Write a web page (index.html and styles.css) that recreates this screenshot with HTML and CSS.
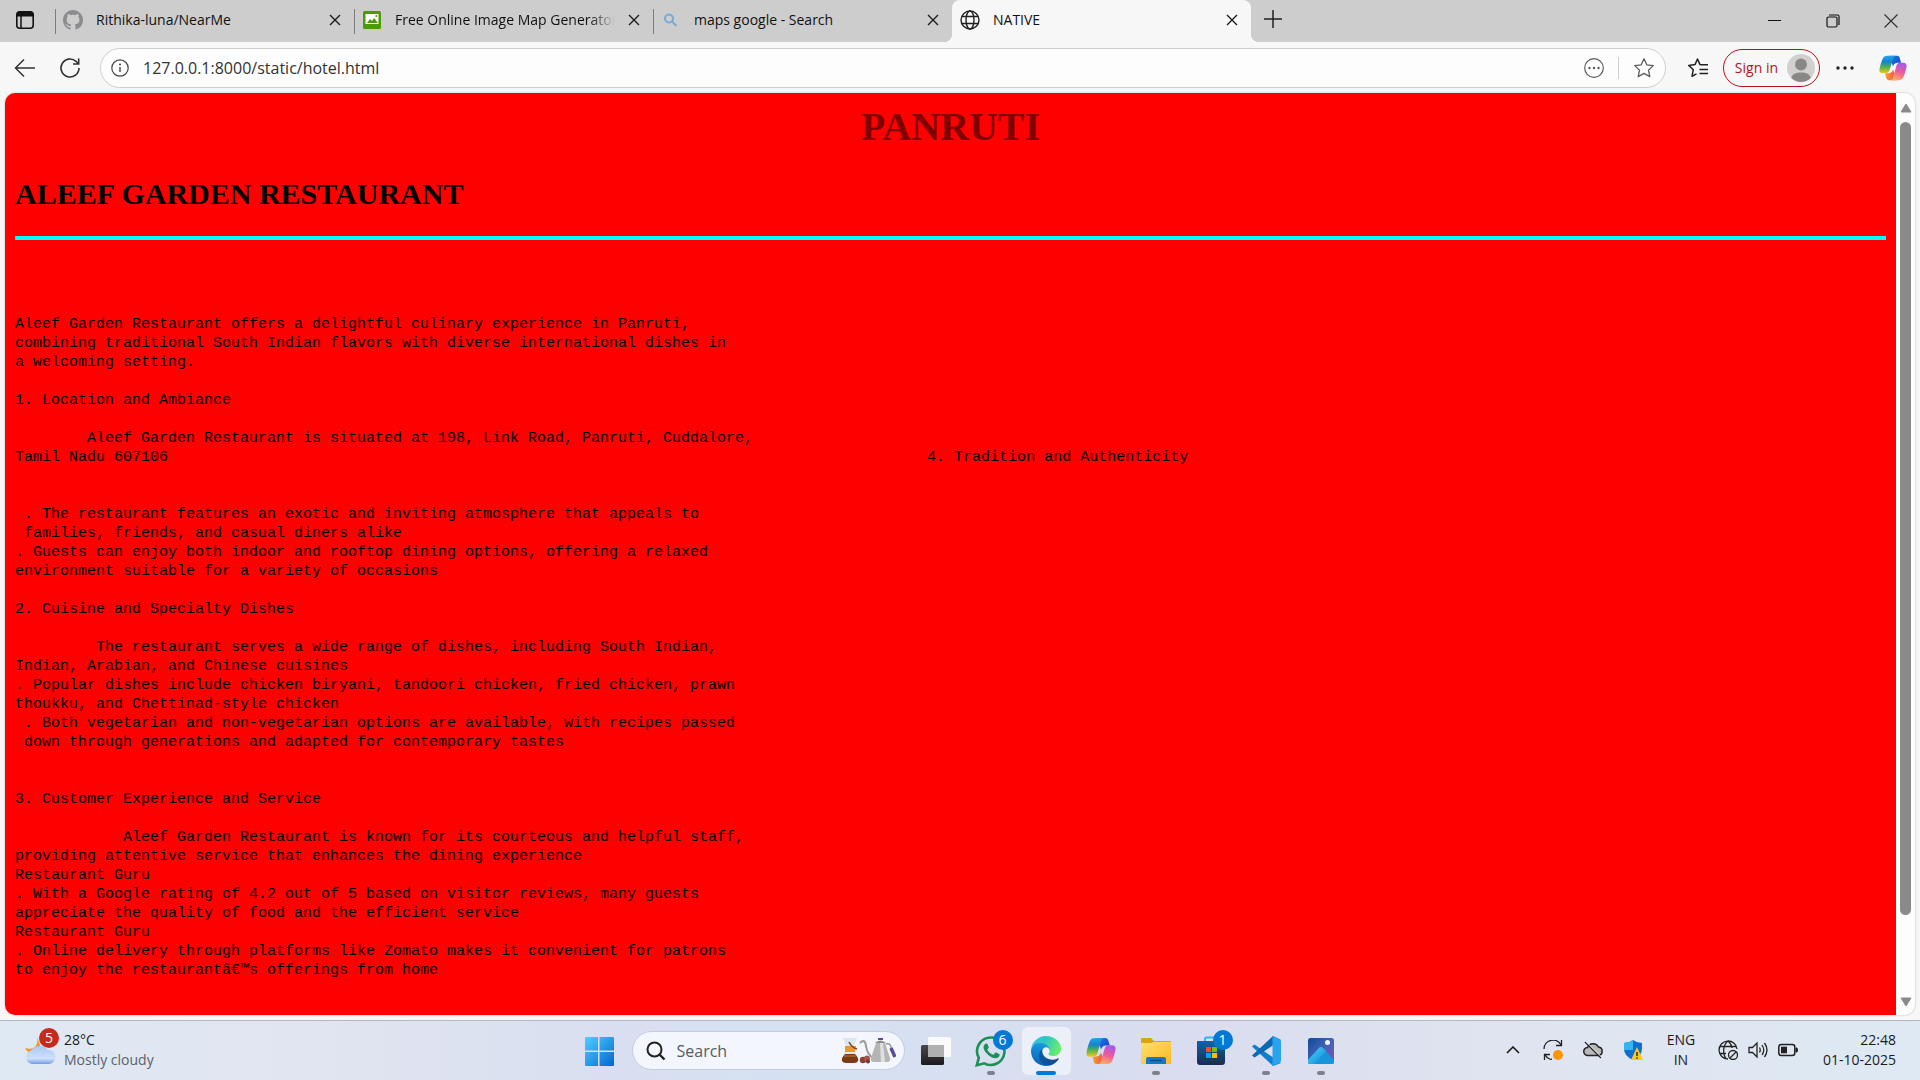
FILE: index.html
```html
<!DOCTYPE html>
<html lang="en">
<head>
<meta charset="utf-8">
<title>NATIVE</title>
<link rel="stylesheet" href="styles.css">
</head>
<body>
<svg class="defs" aria-hidden="true">
  <defs>
    <linearGradient id="copA" x1="0" y1="0" x2="0" y2="1"><stop offset="0" stop-color="#1fa5ee"/><stop offset=".35" stop-color="#1583c9"/><stop offset=".65" stop-color="#54b24f"/><stop offset="1" stop-color="#f4c815"/></linearGradient>
    <linearGradient id="copB" x1=".6" y1="0" x2=".3" y2="1"><stop offset="0" stop-color="#a557ec"/><stop offset=".5" stop-color="#ee5a9b"/><stop offset="1" stop-color="#fdb05c"/></linearGradient>
    <linearGradient id="copC" x1="0" y1="0" x2="1" y2="1"><stop offset="0" stop-color="#1c86e8"/><stop offset="1" stop-color="#1735c4"/></linearGradient>
    <linearGradient id="copD" x1="0" y1="0" x2="1" y2="0"><stop offset="0" stop-color="#f6a033"/><stop offset="1" stop-color="#ef4a43"/></linearGradient>
    <symbol id="copilot" viewBox="0 0 30 30">
      <path fill="url(#copC)" d="M11 2h8.500c1.500 0 2.300 1 2.700 2.300l1.500 5.200H20c-3 0-4.500 2-5 4z"/>
      <path fill="url(#copD)" d="M19 28h-8.500c-1.500 0-2.300-1-2.700-2.300L6.500 20.500H10c3 0 4.500-2 5-4z"/>
      <path fill="url(#copA)" d="M9 2h9c-1.500 0-2.500 1.200-3 3l-3.500 12c-.7 2.500-2 3.700-4.300 3.700H4c-2.600 0-4-1.700-3.500-4.300C1.300 12 2.500 8.500 3.800 5.300 4.700 3 6.500 2 9 2z"/>
      <path fill="url(#copB)" d="M21 28h-9c1.500 0 2.500-1.200 3-3l3.500-12c.7-2.500 2-3.700 4.300-3.700H26c2.600 0 4 1.700 3.500 4.300-.8 4.400-2 7.900-3.300 11.100-.9 2.300-2.700 3.300-5.200 3.300z"/>
    </symbol>
    <symbol id="cross" viewBox="0 0 12 12"><path d="M1 1l10 10M11 1L1 11" fill="none" stroke="#1b1b1b" stroke-width="1.400"/></symbol>
    <symbol id="globe" viewBox="0 0 20 20"><g fill="none" stroke="#222" stroke-width="1.400"><circle cx="10" cy="10" r="9"/><ellipse cx="10" cy="10" rx="4" ry="9"/><path d="M1.800 6.500h16.400M1.800 13.500h16.400"/></g></symbol>
  </defs>
</svg>

<header class="browser">
  <div class="tabstrip">
    <button class="tab-actions" aria-label="Tab actions">
      <svg width="20" height="20" viewBox="0 0 20 20"><rect x="1.800" y="1.800" width="16.400" height="16.400" rx="3" fill="none" stroke="#111" stroke-width="1.600"/><path d="M2 6V4.500Q2 2 4.500 2h11Q18 2 18 4.500V6z" fill="#111" stroke="#111"/><path d="M6 6v12" stroke="#111" stroke-width="1.500"/></svg>
    </button>
    <nav class="tabs" aria-label="Tabs">
      <div class="tab">
        <svg class="favicon" viewBox="0 0 16 16"><path fill="#8a8c8f" d="M8 0C3.580 0 0 3.580 0 8c0 3.540 2.290 6.530 5.470 7.590.4.070.55-.17.55-.38 0-.19-.01-.82-.01-1.490-2.010.37-2.530-.49-2.690-.94-.09-.23-.48-.94-.82-1.130-.28-.15-.68-.52-.01-.53.63-.01 1.080.58 1.230.82.72 1.210 1.870.87 2.330.66.070-.52.28-.87.51-1.070-1.780-.2-3.640-.89-3.640-3.950 0-.87.31-1.590.82-2.150-.08-.2-.36-1.020.08-2.120 0 0 .67-.21 2.200.82.64-.18 1.320-.27 2-.27s1.360.09 2 .27c1.530-1.040 2.200-.82 2.200-.82.44 1.100.16 1.920.08 2.120.51.56.82 1.270.82 2.150 0 3.070-1.870 3.750-3.650 3.950.29.25.54.73.54 1.480 0 1.070-.01 1.930-.01 2.200 0 .21.15.46.55.38A8.010 8.010 0 0 0 16 8c0-4.420-3.580-8-8-8z"/></svg>
        <a class="tab-title" href="#">Rithika-luna/NearMe</a>
        <button class="tab-close" aria-label="Close tab"><svg width="12" height="12"><use href="#cross"/></svg></button>
      </div>
      <div class="tab">
        <svg class="favicon" viewBox="0 0 20 20"><rect x="1" y="1" width="18" height="18" rx="1.500" fill="#4a9b08"/><path d="M3.500 4h13v10h-13z" fill="#fff"/><path d="M5 13l3-4 2 2 2-3 4 5z" fill="#4a9b08"/><circle cx="14.300" cy="6" r="1" fill="#4a9b08"/></svg>
        <a class="tab-title faded" href="#">Free Online Image Map Generator</a>
        <button class="tab-close" aria-label="Close tab"><svg width="12" height="12"><use href="#cross"/></svg></button>
      </div>
      <div class="tab">
        <svg class="favicon" viewBox="0 0 20 20"><g fill="none" stroke="#79a9d4" stroke-width="2"><circle cx="8" cy="8.500" r="4"/><path d="M11 11.500l4.500 4.500"/></g></svg>
        <a class="tab-title" href="#">maps google - Search</a>
        <button class="tab-close" aria-label="Close tab"><svg width="12" height="12"><use href="#cross"/></svg></button>
      </div>
      <div class="tab active">
        <svg class="favicon"><use href="#globe"/></svg>
        <a class="tab-title" href="#">NATIVE</a>
        <button class="tab-close" aria-label="Close tab"><svg width="12" height="12"><use href="#cross"/></svg></button>
      </div>
      <button class="new-tab" aria-label="New tab"><svg width="18" height="18" viewBox="0 0 18 18"><path d="M9 0v18M0 9h18" stroke="#222" stroke-width="1.500"/></svg></button>
    </nav>
    <div class="window-controls">
      <button aria-label="Minimize"><svg width="14" height="14" viewBox="0 0 14 14"><path d="M0 6.500h13" stroke="#111"/></svg></button>
      <button aria-label="Restore"><svg width="14" height="14" viewBox="0 0 14 14" fill="none" stroke="#111" stroke-width="1.200"><rect x="1" y="3" width="10" height="10" rx="1.500"/><path d="M3 1h8.500Q13 1 13 2.500V11"/></svg></button>
      <button aria-label="Close"><svg width="14" height="14" viewBox="0 0 14 14"><path d="M.5.5l13 13M13.500.5l-13 13" stroke="#333" stroke-width="1.200"/></svg></button>
    </div>
  </div>

  <div class="toolbar">
    <button class="nav-button" aria-label="Back"><svg width="22" height="20" viewBox="0 0 22 20"><path d="M21 10H2M10 1.500L1.500 10 10 18.500" fill="none" stroke="#333" stroke-width="1.500"/></svg></button>
    <button class="nav-button" aria-label="Refresh"><svg width="22" height="22" viewBox="0 0 22 22"><path d="M20 11a9 9 0 1 1-3-6.700L19.500 7M19.700 1.500V7H14" fill="none" stroke="#333" stroke-width="1.600"/></svg></button>
    <div class="address">
      <button aria-label="Site information"><svg width="18" height="18" viewBox="0 0 18 18"><circle cx="9" cy="9" r="8.200" fill="none" stroke="#444" stroke-width="1.200"/><path d="M9 8v5" stroke="#444" stroke-width="1.400"/><circle cx="9" cy="5.500" r="1" fill="#444"/></svg></button>
      <input type="text" aria-label="Address" value="127.0.0.1:8000/static/hotel.html">
      <button aria-label="More page actions"><svg width="20" height="20" viewBox="0 0 20 20"><circle cx="10" cy="10" r="9.300" fill="none" stroke="#5c5c5c" stroke-width="1.200"/><g fill="#5c5c5c"><circle cx="5.500" cy="10" r="1.200"/><circle cx="10" cy="10" r="1.200"/><circle cx="14.500" cy="10" r="1.200"/></g></svg></button>
      <span class="divider"></span>
      <button aria-label="Add to favorites"><svg width="22" height="22" viewBox="0 0 22 22"><path d="M11 1.800l2.800 6 6.500.8-4.800 4.500 1.300 6.500-5.800-3.200-5.800 3.200 1.300-6.500L1.700 8.600l6.500-.8z" fill="none" stroke="#5c5c5c" stroke-width="1.300" stroke-linejoin="round"/></svg></button>
    </div>
    <button class="favorites" aria-label="Favorites"><svg width="22" height="22" viewBox="0 0 22 22"><path d="M14 7.700l-1-.1L10.500 2 8 7.600l-6.300.8 4.600 4.300L5 19.300l4.500-2.500M14 7.800h7M12.500 12.500H21M12.500 16.500H21" fill="none" stroke="#222" stroke-width="1.500" stroke-linejoin="round"/></svg></button>
    <button class="sign-in"><span>Sign in</span><svg width="28" height="28" viewBox="0 0 28 28"><circle cx="14" cy="14" r="14" fill="#d2d0ce"/><circle cx="14" cy="10.500" r="6" fill="#8a8886"/><path d="M4.300 24C5 20 9 18.500 14 18.500S23 20 23.700 24A14 14 0 0 1 4.300 24z" fill="#8a8886"/></svg></button>
    <button class="settings" aria-label="Settings and more"><svg width="18" height="4" viewBox="0 0 18 4" fill="#222"><circle cx="2" cy="2" r="1.700"/><circle cx="9" cy="2" r="1.700"/><circle cx="16" cy="2" r="1.700"/></svg></button>
    <button class="copilot-button" aria-label="Copilot"><svg width="28" height="28"><use href="#copilot"/></svg></button>
  </div>
</header>

<div class="viewport">
  <main class="page">
    <h1>PANRUTI</h1>
    <h2>ALEEF GARDEN RESTAURANT</h2>
    <hr>
    <div class="article">
<pre>Aleef Garden Restaurant offers a delightful culinary experience in Panruti,
combining traditional South Indian flavors with diverse international dishes in
a welcoming setting.

1. Location and Ambiance

        Aleef Garden Restaurant is situated at 198, Link Road, Panruti, Cuddalore,
Tamil Nadu 607106


 . The restaurant features an exotic and inviting atmosphere that appeals to
 families, friends, and casual diners alike
. Guests can enjoy both indoor and rooftop dining options, offering a relaxed
environment suitable for a variety of occasions

2. Cuisine and Specialty Dishes

         The restaurant serves a wide range of dishes, including South Indian,
Indian, Arabian, and Chinese cuisines
. Popular dishes include chicken biryani, tandoori chicken, fried chicken, prawn
thoukku, and Chettinad-style chicken
 . Both vegetarian and non-vegetarian options are available, with recipes passed
 down through generations and adapted for contemporary tastes


3. Customer Experience and Service

            Aleef Garden Restaurant is known for its courteous and helpful staff,
providing attentive service that enhances the dining experience
Restaurant Guru
. With a Google rating of 4.2 out of 5 based on visitor reviews, many guests
appreciate the quality of food and the efficient service
Restaurant Guru
. Online delivery through platforms like Zomato makes it convenient for patrons
to enjoy the restaurantâ€™s offerings from home</pre>
<pre class="aside">4. Tradition and Authenticity</pre>
    </div>
  </main>
  <div class="scrollbar">
    <svg width="12" height="10" viewBox="0 0 12 10"><path d="M6 1l5 8H1z" fill="#8a8a8a" stroke="#8a8a8a" stroke-linejoin="round"/></svg>
    <div class="track"><div class="thumb"></div></div>
    <svg width="12" height="10" viewBox="0 0 12 10"><path d="M6 9L1 1h10z" fill="#8a8a8a" stroke="#8a8a8a" stroke-linejoin="round"/></svg>
  </div>
</div>

<footer class="taskbar">
  <button class="weather">
    <span class="weather-icon">
      <svg width="32" height="32" viewBox="0 0 32 32"><defs><linearGradient id="cloud" x1="0" y1="0" x2="0" y2="1"><stop offset="0" stop-color="#a9c7f7"/><stop offset=".7" stop-color="#cfe0fb"/><stop offset="1" stop-color="#6f9bea"/></linearGradient></defs><path d="M13 2c2 8-2 15-12 12 3 7 12 7 16 1z" fill="#f19a1f"/><path d="M8 30a7 7 0 0 1-1-13.500 10 9 0 0 1 17-.5 7 7 0 0 1 1 14z" fill="url(#cloud)"/></svg>
      <span class="badge red">5</span>
    </span>
    <span class="weather-text"><span>28°C</span><span class="muted">Mostly cloudy</span></span>
  </button>

  <div class="apps">
    <button class="app" aria-label="Start"><svg width="30" height="30" viewBox="0 0 30 30"><defs><linearGradient id="win" x1="0" y1="0" x2="1" y2="1"><stop offset="0" stop-color="#4fd0ff"/><stop offset="1" stop-color="#0067cf"/></linearGradient></defs><path fill="url(#win)" d="M2 1h12v13.500H1V2Q1 1 2 1zM15.500 1H29q1 0 1 1v12.500H15.500zM1 16h13v14H2q-1 0-1-1zM15.500 16H30v13q0 1-1 1H15.500z"/></svg></button>
    <label class="search">
      <svg width="20" height="20" viewBox="0 0 20 20"><circle cx="8.500" cy="8.500" r="7" fill="none" stroke="#222" stroke-width="2"/><path d="M13.500 13.500l5 5" stroke="#222" stroke-width="2.400"/></svg>
      <input type="text" placeholder="Search" aria-label="Search">
      <svg width="56" height="28" viewBox="0 0 56 28">
        <path d="M3 1h14l-4 10 4 8H3l4-8z" fill="#dbe7ec"/><path d="M5 9h11l-1 6H5z" fill="#e39b31"/><path d="M9 5q3 6 8 7" stroke="#8a3b1c" stroke-width="1.500" fill="none"/><path d="M5 17h10q4 4 3 7-1 2-4 2H6q-3 0-4-2-1-3 3-7z" fill="#7b3a17"/><path d="M4 19h12" stroke="#c9783a"/>
        <circle cx="23" cy="23" r="3.200" fill="#8b3f35"/><circle cx="27" cy="21.500" r="3" fill="#a25548"/><circle cx="28" cy="24.500" r="2" fill="#75332c"/>
        <path d="M34 22Q27 17 26 9t-6-3" fill="none" stroke="#9a9a9a" stroke-width="2"/><path d="M36 6h9l5 15q1 4-3 4H34q-4 0-3-4z" fill="#b5b5b5"/><path d="M40 6h3l2 19h-4z" fill="#e0e0e0"/><path d="M35 6q5-5 11 0z" fill="#8d8d8d"/><path d="M38 1h5v2h-5z" fill="#5a4a94"/><path d="M46 7q6-1 5 6" fill="none" stroke="#999" stroke-width="1.500"/><path d="M51 11l4 9" stroke="#5c4c98" stroke-width="3.500"/>
      </svg>
    </label>
    <button class="app" aria-label="Task view"><svg width="30" height="30" viewBox="0 0 30 30"><defs><linearGradient id="dark" x1="0" y1="0" x2="0" y2="1"><stop offset="0" stop-color="#4a4a4a"/><stop offset="1" stop-color="#1b1b1b"/></linearGradient></defs><rect x="0" y="9" width="23" height="20" rx="1.500" fill="url(#dark)"/><rect x="7" y="1" width="23" height="20" rx="1.500" fill="#fafafa"/><path d="M7 9h16v12H8.500Q7 21 7 19.500z" fill="#b0b0b0"/></svg></button>
    <button class="app running" aria-label="WhatsApp"><svg width="32" height="32" viewBox="0 0 32 32"><path d="M1.800 30.200l2-7.300A13.700 13.700 0 1 1 9.300 28.300z" fill="none" stroke="#1d8f57" stroke-width="2.600"/><path d="M11.500 8.500c.6 0 .9.200 1.200.9l1 2.500c.2.500 0 .9-1.200 2.300-.3.300 0 .8.300 1.300 1.200 1.900 2.800 3.200 4.900 4.100.5.200.8.100 1.100-.2l1.300-1.600c.4-.5.700-.4 1.300-.2l2.600 1.300c.5.300.8.400.7.900-.2 2.200-2 3.400-4 3.500-2.600.1-6.600-1.900-9.200-5-2.200-2.500-3.400-5.100-2.800-7.400.4-1.400 1.600-2.400 2.800-2.400z" fill="#1d8f57"/></svg><span class="badge blue">6</span></button>
    <button class="app running current" aria-label="Microsoft Edge"><svg width="30" height="30" viewBox="0 0 256 256"><defs><linearGradient id="e1" x1="0" y1=".5" x2="1" y2=".5"><stop offset="0" stop-color="#0c59a4"/><stop offset="1" stop-color="#114a8b"/></linearGradient><linearGradient id="e2" x1=".6" y1="0" x2=".4" y2="1"><stop offset="0" stop-color="#1b9de2"/><stop offset=".5" stop-color="#0f7fd0"/><stop offset="1" stop-color="#0a61b8"/></linearGradient><linearGradient id="e3" x1="0" y1="0" x2="1" y2=".3"><stop offset="0" stop-color="#35c1f1"/><stop offset=".5" stop-color="#2dc7c0"/><stop offset="1" stop-color="#66eb6e"/></linearGradient></defs><path fill="url(#e1)" d="M231 190.500c-3.400 1.800-6.900 3.400-10.500 4.700a101.900 101.900 0 0 1-35.900 6.500c-47.300 0-88.500-32.500-88.500-74.300 0-11.400 6.400-21.900 16.600-27.400-42.800 1.800-53.800 46.400-53.800 72.500 0 73.900 68.100 81.400 82.800 81.400 7.900 0 19.800-2.300 27-4.600l1.300-.4a128.300 128.300 0 0 0 66.600-52.800 4 4 0 0 0-5.600-5.600z"/><path fill="url(#e2)" d="M105.700 241.400a79.200 79.200 0 0 1-22.700-21.300 80.700 80.700 0 0 1 29.500-120c3.200-1.500 8.500-4.100 15.600-4 10.200.1 19.700 4.900 25.800 13 4 5.400 6.300 11.900 6.400 18.700 0-.2 24.500-79.600-80-79.600-43.900 0-80 41.700-80 78.200-.2 19.300 4 38.500 12.100 56a128 128 0 0 0 156.400 67 75.500 75.500 0 0 1-63.100-8z"/><path fill="url(#e3)" d="M152.300 148.900c-.9 1-3.400 2.500-3.400 5.600 0 2.600 1.700 5.200 4.800 7.300 14.400 10.100 41.700 8.700 41.800 8.700 10.700 0 21.200-2.900 30.500-8.300A61.800 61.800 0 0 0 256.400 109c.3-22.400-8-37.300-11.300-43.900C223.900 23.500 177.700 0 128 0A128 128 0 0 0 0 126.200c.5-36.500 36.800-66 80-66 3.500 0 23.500.3 42 10.100 16.300 8.600 24.900 18.900 30.800 29.200 6.200 10.700 7.300 24.100 7.300 29.500s-2.700 13.300-7.800 19.900z"/></svg></button>
    <button class="app" aria-label="Copilot"><svg width="30" height="30"><use href="#copilot"/></svg></button>
    <button class="app running" aria-label="File Explorer"><svg width="30" height="28" viewBox="0 0 30 28"><defs><linearGradient id="fold" x1="0" y1="0" x2="1" y2="1"><stop offset="0" stop-color="#ffe06e"/><stop offset="1" stop-color="#f8ba24"/></linearGradient></defs><path d="M0 2Q0 1 1 1h9l3 3h16q1 0 1 1v8H0z" fill="#dda313"/><path d="M0 6h10l3-1h17v21q0 1-1 1H1q-1 0-1-1z" fill="url(#fold)"/><path d="M5 27v-5q0-2 2-2h16q2 0 2 2v5z" fill="#1579c8"/><path d="M9 23.500h12" stroke="#0b4f93" stroke-width="1.500"/></svg></button>
    <button class="app" aria-label="Microsoft Store"><svg width="30" height="30" viewBox="0 0 30 30"><defs><linearGradient id="bag" x1="0" y1="0" x2="0" y2="1"><stop offset="0" stop-color="#0f62ae"/><stop offset="1" stop-color="#1b2c4d"/></linearGradient></defs><path d="M9 6V3q0-1.500 1.500-1.500h9Q21 1.500 21 3v3" fill="none" stroke="#2bb5ea" stroke-width="2"/><path d="M1 5h28v21q0 3-3 3H4q-3 0-3-3z" fill="url(#bag)"/><path d="M10 11h5v5h-5z" fill="#f25022"/><path d="M16 11h5v5h-5z" fill="#7fba00"/><path d="M10 17h5v5h-5z" fill="#00a4ef"/><path d="M16 17h5v5h-5z" fill="#ffb900"/></svg><span class="badge blue">1</span></button>
    <button class="app running" aria-label="Visual Studio Code"><svg width="30" height="30" viewBox="0 0 30 30"><path d="M1 10.500l2.500-2L30 27l-8 3z" fill="#0f7fcc"/><path d="M1 19.500l2.500 2L30 4l-8-4z" fill="#0a69b4"/><path d="M21.500 0L28 2.800q2 .8 2 3v18.400q0 2.200-2 3L21.500 30z" fill="#2aa3ee"/></svg></button>
    <button class="app running" aria-label="Photos"><svg width="26" height="26" viewBox="0 0 26 26"><defs><linearGradient id="ph" x1="0" y1="0" x2="1" y2="1"><stop offset="0" stop-color="#124a9c"/><stop offset=".5" stop-color="#4462b5"/><stop offset="1" stop-color="#8b4fb0"/></linearGradient><linearGradient id="mt" x1="0" y1="0" x2="1" y2="1"><stop offset="0" stop-color="#46d6f8"/><stop offset="1" stop-color="#1386d8"/></linearGradient></defs><rect width="26" height="26" rx="2.500" fill="url(#ph)"/><path d="M0 22L11 10q2-2 4 0l11 12v2q0 2-2 2H2q-2 0-2-2z" fill="#1795dc"/><path d="M0 22L11 10q2-2 4 0l3 3L6 26H2q-2 0-2-2z" fill="url(#mt)"/><circle cx="19.500" cy="4.500" r="2.500" fill="#f3f4ff"/></svg></button>
  </div>

  <div class="tray">
    <button class="tray-icon" aria-label="Show hidden icons"><svg width="14" height="8" viewBox="0 0 14 8"><path d="M1 7l6-6 6 6" fill="none" stroke="#1b1b1b" stroke-width="1.600"/></svg></button>
    <button class="tray-icon" aria-label="Update"><svg width="20" height="20" viewBox="0 0 20 20"><path d="M1 9A9 9 0 0 1 18 5M18.500 0v5.500H13M9 19.500a9 9 0 0 1-7-5M1.500 20v-5.500H7" fill="none" stroke="#222" stroke-width="1.300"/><circle cx="15" cy="15" r="5" fill="#ff9500"/></svg></button>
    <button class="tray-icon" aria-label="OneDrive"><svg width="20" height="18" viewBox="0 0 20 18"><path d="M5 14.500a4 4 0 0 1-.5-8 6 6 0 0 1 11-.5 4.300 4.300 0 0 1 0 8.500z" fill="#b9b9b9" stroke="#222" stroke-width="1.500"/><path d="M2 1l16 16" stroke="#222" stroke-width="1.500"/><path d="M3.500 1l16 16" stroke="#e6ecf3"/></svg></button>
    <button class="tray-icon" aria-label="Windows Security"><svg width="20" height="20" viewBox="0 0 20 20"><path d="M10 0q4 3 9 3v6q0 7-9 11Q1 16 1 9V3q5 0 9-3z" fill="#0f6fd0"/><path d="M10 0v10H1V3q5 0 9-3z" fill="#34b4f0"/><path d="M14 7l6 13H8z" fill="#ffc61a"/><path d="M14 12v4M14 17.200v1.500" stroke="#222" stroke-width="1.400"/></svg></button>
    <button class="language"><span>ENG</span><span>IN</span></button>
    <button class="system" aria-label="Network, volume and battery">
      <svg width="20" height="20" viewBox="0 0 20 20"><g fill="none" stroke="#222" stroke-width="1.300"><path d="M10 19A9 9 0 1 1 19 9M10 1C4.500 5 4.500 15 8.500 19M10 1c2.500 2 3.600 4.500 4 7M1.800 6.500h16.400M1.800 13.500H8"/><circle cx="15" cy="15" r="4.500"/><path d="M12 18l6-6"/></g></svg>
      <svg width="20" height="18" viewBox="0 0 20 18"><g fill="none" stroke="#222" stroke-width="1.300"><path d="M1 6.500h3.500L9 2v14l-4.500-4.500H1zM11.500 6.500q1.500 2.500 0 5M14 4q3.500 5 0 10M16.500 2q5 7 0 14"/></g></svg>
      <svg width="20" height="14" viewBox="0 0 20 14"><rect x=".8" y="1.500" width="16" height="11" rx="2.500" fill="none" stroke="#222" stroke-width="1.500"/><rect x="3" y="3.700" width="6" height="6.600" fill="#222"/><path d="M18 5h1q1 2 0 4h-1z" fill="#222" stroke="#222"/></svg>
    </button>
    <button class="clock"><span>22:48</span><span>01-10-2025</span></button>
  </div>
</footer>
</body>
</html>
```
FILE: styles.css
```css
* {
  box-sizing: border-box;
}

body {
  margin: 0;
  min-height: 100vh;
  display: flex;
  flex-direction: column;
  background: #f7f7f7;
  font-family: "Open Sans", "Noto Sans", sans-serif;
  font-size: 14px;
  color: #1b1b1b;
}

button,
input {
  margin: 0;
  padding: 0;
  border: 0;
  background: none;
  font: inherit;
  color: inherit;
}

button {
  display: flex;
  align-items: center;
  justify-content: center;
  flex: none;
}

svg {
  display: block;
  flex: none;
}

.defs {
  position: absolute;
  width: 0;
  height: 0;
}

/* Tab strip */
.tabstrip {
  display: flex;
  height: 42px;
  background: #cdcdcd;
}

.tab-actions {
  width: 55px;
  padding: 0 6px 2px 0;
}

.tabs {
  display: flex;
  flex: 1;
  min-width: 0;
}

.tab {
  display: flex;
  align-items: center;
  gap: 13px;
  flex: 0 1 299px;
  min-width: 0;
  padding: 0 13px 2px 8px;
  background: linear-gradient(#7d7d7d, #7d7d7d) 0 9px / 1px 25px no-repeat;
}

.tab.active {
  position: relative;
  background: #f7f7f7;
  border-radius: 8px 8px 0 0;
}

.tab.active::before,
.tab.active::after {
  content: "";
  position: absolute;
  bottom: 0;
  width: 8px;
  height: 8px;
}

.tab.active::before {
  right: 100%;
  background: radial-gradient(circle at 0 0, transparent 8px, #f7f7f7 8px);
}

.tab.active::after {
  left: 100%;
  background: radial-gradient(circle at 100% 0, transparent 8px, #f7f7f7 8px);
}

.favicon {
  width: 20px;
  height: 20px;
}

.tab-title {
  flex: 1;
  overflow: hidden;
  white-space: nowrap;
  line-height: 20px;
  color: #111;
  text-decoration: none;
}

.tab-title.faded {
  mask-image: linear-gradient(to right, #000 88%, transparent);
}

.new-tab {
  width: 44px;
  padding-bottom: 4px;
}

.window-controls {
  display: flex;
}

.window-controls button {
  width: 58px;
}

/* Toolbar */
.toolbar {
  display: flex;
  align-items: center;
  height: 51px;
  padding: 0 8px 0 2px;
}

.nav-button {
  width: 45px;
  height: 40px;
}

.address {
  display: flex;
  align-items: center;
  flex: 1;
  min-width: 0;
  height: 40px;
  margin-left: 8px;
  padding: 0 10px;
  border: 1px solid #cfcfcf;
  border-radius: 20px;
  background: #fdfdfd;
}

.address input {
  flex: 1;
  min-width: 0;
  padding-left: 14px;
  font-size: 16px;
  line-height: 24px;
  color: #333;
}

.divider {
  width: 1px;
  height: 22px;
  margin: 0 14px;
  background: #cfcfcf;
}

.favorites {
  width: 57px;
  padding-left: 8px;
}

.sign-in {
  height: 38px;
  gap: 9px;
  padding: 0 4px 0 11px;
  border: 1px solid #b3141b;
  border-radius: 19px;
  color: #b3141b;
}

.settings {
  width: 50px;
}

.copilot-button {
  width: 42px;
  padding-left: 4px;
}

/* Web page area */
.viewport {
  display: flex;
  flex: 1;
  margin: 0 5px 5px;
  overflow: hidden;
  border-radius: 10px;
  background: #fdfdfd;
  box-shadow: 0 0 2px #b0b0b0;
}

.page {
  flex: 1;
  min-width: 0;
  padding: 11px 10px 20px;
  background: #ff0000;
  color: #000;
  font-family: "Liberation Serif", "Times New Roman", serif;
}

h1 {
  margin: 0 0 27px;
  font-size: 40px;
  line-height: 46px;
  text-align: center;
  color: #800000;
}

h2 {
  margin: 0 0 25px;
  font-size: 30px;
  line-height: 34px;
}

hr {
  height: 4px;
  margin: 0 0 75px;
  border: 0;
  background: #00ffff;
}

.article {
  display: grid;
  grid-template-columns: 39fr 41fr;
}

pre {
  margin: 0;
  font-family: "Liberation Mono", "Courier New", monospace;
  font-size: 15px;
  line-height: 19px;
}

.aside {
  padding-top: 133px;
}

.scrollbar {
  display: flex;
  flex-direction: column;
  align-items: center;
  width: 19px;
  padding: 10px 0 8px;
}

.track {
  flex: 1;
  width: 11px;
  padding: 9px 0 4px;
}

.thumb {
  height: 91%;
  border-radius: 6px;
  background: #8a8a8a;
}

/* Taskbar */
.taskbar {
  display: grid;
  grid-template-columns: 1fr auto 1fr;
  align-items: center;
  height: 60px;
  border-top: 1px solid #b2b8c2;
  background: linear-gradient(to right, #dfe9f3, #e1e5f1 16%, #d9dff0 32%, #d5e1f2 40%, #d9ddef 62%, #dfe4f0 78%, #dee9f3);
}

.weather {
  justify-self: start;
  gap: 8px;
  padding: 0 0 2px 24px;
}

.weather-icon {
  position: relative;
}

.weather-text {
  display: flex;
  flex-direction: column;
  align-items: flex-start;
  line-height: 20px;
}

.muted {
  color: #5b6068;
}

.badge {
  position: absolute;
  width: 20px;
  height: 20px;
  border-radius: 50%;
  line-height: 20px;
  text-align: center;
  color: #fff;
}

.badge.red {
  top: -6px;
  right: -3px;
  background: #c42b1c;
}

.badge.blue {
  top: 3px;
  right: 6px;
  background: #0078d4;
}

.apps {
  display: flex;
  align-items: center;
}

.app {
  position: relative;
  width: 55px;
  height: 48px;
}

.app.current {
  width: 49px;
  margin: 0 3px;
  border-radius: 6px;
  background: #ebeff8;
}

.app.running::after {
  content: "";
  position: absolute;
  bottom: 0;
  width: 8px;
  height: 4px;
  border-radius: 2px;
  background: #7c818c;
}

.app.current::after {
  width: 20px;
  background: #0078d4;
}

.search {
  display: flex;
  align-items: center;
  width: 273px;
  height: 39px;
  margin: 0 4px 0 5px;
  padding: 0 8px 0 13px;
  border: 1px solid #c3cbdd;
  border-radius: 20px;
  background: #f3f6fc;
}

.search input {
  flex: 1;
  min-width: 0;
  padding-left: 11px;
  font-size: 16px;
  line-height: 24px;
}

.search input::placeholder {
  color: #555b64;
  opacity: 1;
}

.tray {
  display: flex;
  align-items: center;
  justify-self: end;
  padding: 0 24px 2px 0;
}

.tray-icon {
  width: 40px;
  height: 40px;
}

.language,
.clock {
  flex-direction: column;
  line-height: 20px;
}

.language {
  width: 56px;
}

.system {
  gap: 10px;
  margin-left: 9px;
}

.clock {
  align-items: flex-end;
  margin-left: 25px;
}
```
